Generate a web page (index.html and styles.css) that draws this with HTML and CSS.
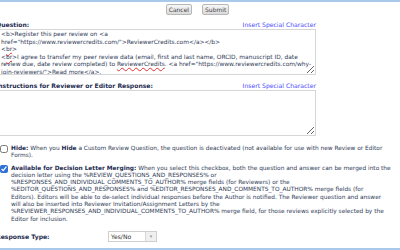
FILE: index.html
```html
<!DOCTYPE html>
<html lang="en">
<head>
    <meta charset="UTF-8">
    <title>Custom Review Question</title>
    <link rel="stylesheet" href="styles.css">
</head>
<body>
    <div class="page">
        <div class="actions">
            <button type="button">Cancel</button>
            <button type="button">Submit</button>
        </div>

        <div class="field">
            <div class="field-head">
                <label>Question:</label>
                <a href="#">Insert Special Character</a>
            </div>
            <div class="textbox" contenteditable="true" spellcheck="false">&lt;b&gt;Register this peer review on &lt;a<br>href="https://www.reviewercredits.com/"&gt;ReviewerCredits.com&lt;/a&gt;&lt;/b&gt;<br>&lt;<span class="typo">br</span>&gt;<br>&lt;<span class="typo">br</span>&gt;I agree to transfer my peer review data (email, first and last name, ORCID, manuscript ID, date<br>review due, date review completed) to <span class="typo">ReviewerCredits</span>. &lt;a href="https://www.reviewercredits.com/why-<br>join-reviewers/"&gt;Read more&lt;/a&gt;.</div>
        </div>

        <div class="field">
            <div class="field-head">
                <label>Instructions for Reviewer or Editor Response:</label>
                <a href="#">Insert Special Character</a>
            </div>
            <div class="textbox" contenteditable="true"></div>
        </div>

        <div class="options">
            <div class="option">
                <input type="checkbox" id="hide">
                <p><b>Hide:</b> When you <b>Hide</b> a Custom Review Question, the question is deactivated (not available for use with new Review or Editor<br>Forms).</p>
            </div>
            <div class="option">
                <input type="checkbox" id="merge" checked>
                <p><b>Available for Decision Letter Merging:</b> When you select this checkbox, both the question and answer can be merged into the<br>decision letter using the %REVIEW_QUESTIONS_AND_RESPONSES% or<br>%RESPONSES_AND_INDIVIDUAL_COMMENTS_TO_AUTHOR% merge fields (for Reviewers) or the<br>%EDITOR_QUESTIONS_AND_RESPONSES% and %EDITOR_RESPONSES_AND_COMMENTS_TO_AUTHOR% merge fields (for<br>Editors). Editors will be able to de-select individual responses before the Author is notified. The Reviewer question and answer<br>will also be inserted into Reviewer Invitation/Assignment Letters by the<br>%REVIEWER_RESPONSES_AND_INDIVIDUAL_COMMENTS_TO_AUTHOR% merge field, for those reviews explicitly selected by the<br>Editor for inclusion.</p>
            </div>
        </div>

        <div class="response-type">
            <label>Response Type:</label>
            <div class="select">
                <span class="select-value">Yes/No</span>
                <span class="select-arrow">&#9662;</span>
            </div>
        </div>
    </div>
</body>
</html>
```

FILE: styles.css
```css
:root {
    --rule-color: #a9c9ea;
    --text-color: #2e3a56;
    --label-color: #1d2b4f;
    --link-color: #4a4aff;
    --border-color: #d6d6d6;
}

* {
    margin: 0;
    padding: 0;
    box-sizing: border-box;
}

body {
    font-family: 'DejaVu Sans', Verdana, sans-serif;
    font-size: 6.1px;
    line-height: 7.3px;
    color: var(--text-color);
    background: #fff;
    width: 400px;
    height: 250px;
    overflow: hidden;
}

.page {
    margin-left: -4px;
    width: 408px;
    height: 250px;
    border-top: 2px solid var(--rule-color);
    border-bottom: 2px solid var(--rule-color);
    display: flex;
    flex-direction: column;
}

.actions {
    display: flex;
    justify-content: center;
    gap: 10px;
    padding: 2px 5px 0 0;
    height: 17px;
}

.actions button {
    font-family: inherit;
    font-size: 6px;
    line-height: 9px;
    color: #444;
    height: 11px;
    padding: 0 2px;
    border: 1px solid #b8b8b8;
    border-radius: 2px;
    background: linear-gradient(#f7f7f7, #dadada);
}

.field {
    width: 320px;
    margin-bottom: 5px;
}

.field-head {
    display: flex;
    justify-content: space-between;
    align-items: flex-end;
    height: 10px;
    padding-bottom: 1px;
}

.field-head label {
    font-weight: bold;
    color: var(--label-color);
}

.field-head a {
    color: var(--link-color);
    text-decoration: none;
}

.textbox {
    width: 320px;
    height: 46px;
    border: 1px solid var(--border-color);
    padding: 1px 4px 0;
    font-size: 5.9px;
    line-height: 7.5px;
    overflow: hidden;
    white-space: nowrap;
    resize: both;
    outline: none;
}

.typo {
    text-decoration: underline wavy #e03030;
    text-decoration-thickness: 0.5px;
}

.options {
    display: flex;
    flex-direction: column;
    gap: 5px;
    padding-top: 4px;
    font-size: 5.85px;
}

.option {
    display: flex;
    align-items: flex-start;
}

.option input {
    width: 8px;
    height: 8px;
    margin: 0 3px 0 4px;
    flex: none;
    accent-color: #2f6fd6;
}

.option p {
    white-space: nowrap;
}

.option b {
    color: var(--label-color);
}

.response-type {
    display: flex;
    align-items: center;
    margin-top: auto;
    margin-bottom: 6px;
    height: 11px;
}

.response-type label {
    font-weight: bold;
    color: var(--label-color);
    width: 112px;
}

.select {
    display: flex;
    width: 49px;
    height: 11px;
    border: 1px solid #cfcfcf;
    color: #333;
}

.select-value {
    flex: 1;
    padding-left: 2px;
    line-height: 9px;
}

.select-arrow {
    width: 11px;
    border-left: 1px solid #d8d8d8;
    background: #f0f0f0;
    color: #999;
    font-size: 5px;
    line-height: 9px;
    text-align: center;
}
```
